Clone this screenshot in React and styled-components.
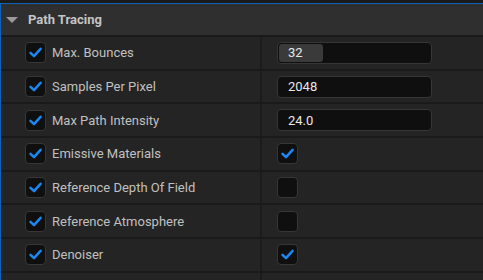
import React from 'react';
import styled, { createGlobalStyle } from 'styled-components';

const Global = createGlobalStyle`
	html, body {
		margin: 0;
		padding: 0;
		background: #1a1a1a;
	}
	body {
		font-family: Roboto, "Noto Sans", "Liberation Sans", sans-serif;
	}
`;

const Panel = styled.div`
	width: 483px;
	height: 280px;
	overflow: hidden;
	background: #1a1a1a;
	padding-top: 3px;
	box-sizing: border-box;
`;

const Frame = styled.div`
	border-top: 1px solid #0d63b8;
	border-left: 1px solid #0d63b8;
	height: 100%;
	display: flex;
	flex-direction: column;
	gap: 2px;
	background: #1a1a1a;
`;

const Header = styled.div`
	height: 31px;
	flex: none;
	display: flex;
	align-items: center;
	background: #2f2f2f;
	padding-left: 5px;
	gap: 10px;
	color: #c4c4c4;
	font-weight: 700;
	font-size: 13px;
`;

const Arrow = styled.span`
	width: 0;
	height: 0;
	border-left: 6px solid transparent;
	border-right: 6px solid transparent;
	border-top: 6px solid #9a9a9a;
	margin-top: 1px;
`;

const Row = styled.div`
	height: 31.7px;
	flex: none;
	display: grid;
	grid-template-columns: 259px 2px 1fr;
	background: #242424;
`;

const Name = styled.div`
	display: flex;
	align-items: center;
	padding-left: 24px;
	gap: 6px;
	color: #c0c0c0;
	font-size: 13px;
`;

const Divider = styled.div`
	background: #1c1c1c;
`;

const Value = styled.div`
	display: flex;
	align-items: center;
	padding-left: 15px;
`;

const Box = styled.div`
	width: 21px;
	height: 21px;
	box-sizing: border-box;
	border: 1px solid #373737;
	border-radius: 4px;
	background: #0f0f0f;
	display: flex;
	align-items: center;
	justify-content: center;
	flex: none;
`;

const Field = styled.div`
	position: relative;
	width: 155px;
	height: 22px;
	box-sizing: border-box;
	border: 1px solid #363636;
	border-radius: 4px;
	background: #0f0f0f;
	display: flex;
	align-items: center;
	overflow: hidden;
`;

const Fill = styled.div`
	position: absolute;
	left: 1px;
	top: 1px;
	bottom: 1px;
	background: #3a3a3a;
	border-radius: 3px;
`;

const FieldText = styled.span`
	position: relative;
	padding-left: 10px;
	color: #e8e8e8;
	font-size: 13px;
`;

const Check = ({ on }) => (
	<Box>
		{on && (
			<svg width="15" height="15" viewBox="0 0 15 15">
				<path d="M2.5 7.8 L6 11.2 L12.6 3.8" fill="none" stroke="#1b87f0" strokeWidth="2.5" strokeLinecap="round" strokeLinejoin="round" />
			</svg>
		)}
	</Box>
);

const rows = [
	{ name: 'Max. Bounces', type: 'slider', value: '32', fill: 44 },
	{ name: 'Samples Per Pixel', type: 'number', value: '2048' },
	{ name: 'Max Path Intensity', type: 'number', value: '24.0' },
	{ name: 'Emissive Materials', type: 'bool', value: true },
	{ name: 'Reference Depth Of Field', type: 'bool', value: false },
	{ name: 'Reference Atmosphere', type: 'bool', value: false },
	{ name: 'Denoiser', type: 'bool', value: true },
];

export default function App() {
	return (
		<>
			<Global />
			<Panel>
				<Frame>
					<Header>
						<Arrow />
						Path Tracing
					</Header>
					{rows.map((r) => (
						<Row key={r.name}>
							<Name>
								<Check on />
								{r.name}
							</Name>
							<Divider />
							<Value>
								{r.type === 'bool' ? (
									<Check on={r.value} />
								) : (
									<Field>
										{r.fill && <Fill style={{ width: r.fill }} />}
										<FieldText>{r.value}</FieldText>
									</Field>
								)}
							</Value>
						</Row>
					))}
					<Row>
						<Name />
						<Divider />
						<Value />
					</Row>
				</Frame>
			</Panel>
		</>
	);
}
